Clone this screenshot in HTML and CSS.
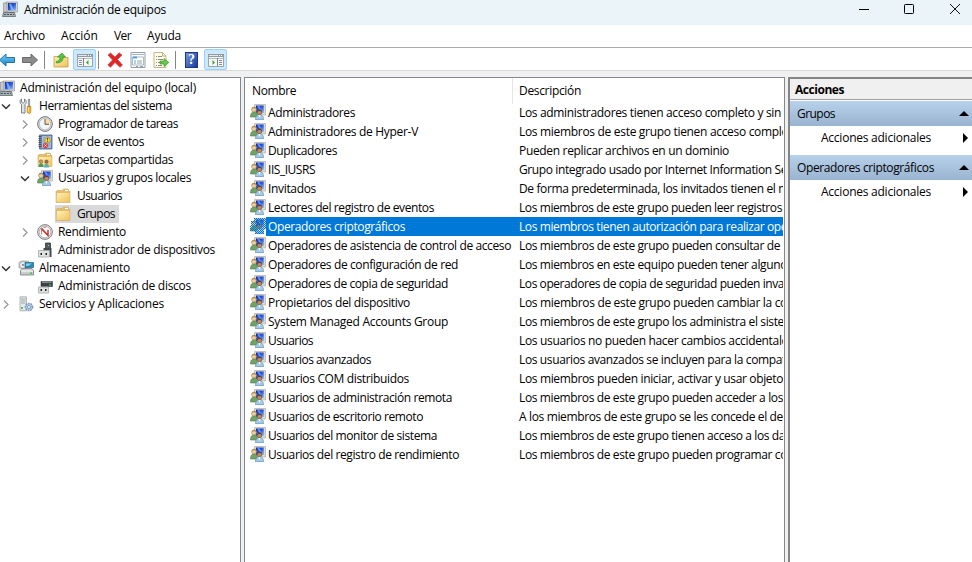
FILE: index.html
```
<!DOCTYPE html>
<html lang="es">
<head>
<meta charset="utf-8">
<title>Administración de equipos</title>
<link rel="stylesheet" href="styles.css">
</head>
<body>
<svg class="defs" aria-hidden="true">
  <linearGradient id="screen" x1="0" y1="0" x2="1" y2="1"><stop offset="0" stop-color="#0a25a8"/><stop offset=".5" stop-color="#2a5be0"/><stop offset="1" stop-color="#8dbcff"/></linearGradient>
  <linearGradient id="folderfill" x1="0" y1="0" x2="1" y2="1"><stop offset="0" stop-color="#fff0b5"/><stop offset="1" stop-color="#eec35c"/></linearGradient>
  <linearGradient id="blueArrow" x1="0" y1="0" x2="0" y2="1"><stop offset="0" stop-color="#7bd0f5"/><stop offset="1" stop-color="#1382c9"/></linearGradient>
  <symbol id="computer" viewBox="0 0 16 16">
    <path d="M4 1h11.500v10H4z" fill="#d9d6c8" stroke="#a3a39c" stroke-width=".8"/><path d="M6 2h8v7.500H6z" fill="url(#screen)"/><path d="M7 2.500h2l3 6.500H9z" fill="#a9c4fa" opacity=".65"/>
    <path d="M1.500 2H5v9H1.500z" fill="#c6c9cc" stroke="#7d8084" stroke-width=".6"/><path d="M8 11h4v1.500H8z" fill="#777"/>
    <path d="M1.500 11.500h11l1 4H.5z" fill="#a9b0b3" stroke="#555c60" stroke-width=".7"/><path d="M2 13.500h2m1 0h2m1 0h2m1 0h1" stroke="#46595d"/>
  </symbol>
  <symbol id="users" viewBox="0 0 16 16">
    <path d="M4.500.5h11V11h-11z" fill="#dedacd" stroke="#b0ada5" stroke-width=".7"/><path d="M6 1.500h7.800v7.500H6z" fill="url(#screen)"/><path d="M7 1.500h2l4 7h-2z" fill="#9bbaf8" opacity=".65"/>
    <path d="M.5 13c0-4 1.500-5 3.500-5s3.500 1 3.500 5z" fill="#6ea565" stroke="#507c4c" stroke-width=".6"/><circle cx="4" cy="5.500" r="2.400" fill="#f0cf9b" stroke="#967a50" stroke-width=".6"/><path d="M1.700 5C2 2.300 6 2.300 6.300 5 5 4 3 4 1.700 5z" fill="#a98a58"/>
    <path d="M5.500 15.700c0-4 2-5 4-5s4 1 4 5z" fill="#a4cbe9" stroke="#5c88b0" stroke-width=".7"/><path d="m8.500 11 1 3 1-3z" fill="#fff"/><circle cx="9.500" cy="8.200" r="2.400" fill="#c48a63" stroke="#68462f" stroke-width=".6"/><path d="M7 8c0-3.500 5-3.500 5 0-1.500-1.500-3.500-1.500-5 0z" fill="#5b4335"/>
  </symbol>
  <symbol id="tools" viewBox="0 0 16 16">
    <path d="M3.500 1v3L5 5.200 6.500 4V1c2 1 2.500 4 .5 5.500V15H3.500V6.500C1.500 5 1.500 2 3.500 1z" fill="#e0e3e5" stroke="#70777b" stroke-width=".9"/><path d="M10.300 1h1.400v8h-1.400z" fill="#9ba1a6" stroke="#6d747a" stroke-width=".5"/><path d="M9.200 8.500h3.600v5c0 2.500-3.600 2.500-3.600 0z" fill="#f2b42f" stroke="#b5750e" stroke-width=".7"/><path d="M10.500 9.500v4" stroke="#ffe08a"/>
  </symbol>
  <symbol id="clock" viewBox="0 0 16 16"><circle cx="8" cy="8" r="7.400" fill="#d5d6d8" stroke="#6c7073" stroke-width=".9"/><circle cx="8" cy="8" r="5.700" fill="#f4f5f7" stroke="#a2a6aa" stroke-width=".6"/><path d="M8 8V2.500A5.500 5.500 0 0 1 13.500 8z" fill="#f8dca4"/><path d="M8 3v5.300h4" fill="none" stroke="#555" stroke-width="1"/></symbol>
  <symbol id="events" viewBox="0 0 16 16"><path d="M2.500 1H15v14H2.500z" fill="#7190bf" stroke="#4c668e" stroke-width=".8"/><path d="M5 2h9v12H5z" fill="#a9bddc"/><path d="M6 4h7m-7 2h7m-7 2h7m-7 2h7m-7 2h7" stroke="#7790b9" stroke-width=".6"/><path d="M1.500 2.500h3m-3 2h3m-3 2h3m-3 2h3m-3 2h3m-3 2h3" stroke="#444" stroke-width=".8"/><path d="m10.500 2 3.500 6H7z" fill="#ffd83b" stroke="#ad9600" stroke-width=".6"/><path d="M10.500 3.800v2m0 .7v1" stroke="#222" stroke-width=".8"/><circle cx="8.500" cy="11.500" r="2.600" fill="#df4245"/><path d="m7.500 10.500 2 2m0-2-2 2" stroke="#fff" stroke-width=".8"/></symbol>
  <symbol id="folder" viewBox="0 0 16 16"><path d="M1 14.500V3.500l1-1h5l1.500-1.500H13l.8 1v1.500h1.200v11z" fill="#e4bd6c" stroke="#cba050" stroke-width=".5"/><path d="M2 5h12.500v9H1.500z" fill="url(#folderfill)"/><path d="M10 2.500h3" stroke="#fff" stroke-width="1.200"/></symbol>
  <symbol id="shared" viewBox="0 0 16 16"><use href="#folder"/><circle cx="4" cy="9.500" r="1.700" fill="#c99f6a" stroke="#6d5128" stroke-width=".5"/><path d="M1.500 15c0-5 5-5 5 0z" fill="#479b67"/><circle cx="9.500" cy="9.700" r="1.700" fill="#a87150" stroke="#553523" stroke-width=".5"/><path d="M7 15.500c0-5 5-5 5 0z" fill="#5caeb8"/></symbol>
  <symbol id="performance" viewBox="0 0 16 16"><circle cx="8" cy="8" r="7.400" fill="#dfe0e2" stroke="#727679" stroke-width=".9"/><circle cx="8" cy="8" r="5.800" fill="#fff" stroke="#999" stroke-width=".6"/><path d="m4 4.500 7 7V5.800" fill="none" stroke="#d93434" stroke-width="1.500"/><path d="M4.500 10.500V6m2-2.300L9.500 3" fill="none" stroke="#e67a7a"/><path d="m5 4 6 7" stroke="#971e23" stroke-width=".6"/></symbol>
  <symbol id="device" viewBox="0 0 16 16"><path d="M8.500 1h5v6h-5z" fill="#555b5e" stroke="#24282a" stroke-width=".7"/><path d="M6.500 6h8v9h-8z" fill="#45494b"/><path d="M1.500 8.500h11v6.500h-11z" fill="#dfe1e0" stroke="#a5a9a8" stroke-width=".8"/><path d="M3.500 11H5v2H3.500zM8.500 11H10v2H8.500z" fill="#222"/><path d="M11 3h1v1h-1z" fill="#71e283"/></symbol>
  <symbol id="storage" viewBox="0 0 16 16"><path d="M1 2.500 3.500 1h7v7H1z" fill="#d2d5d7" stroke="#999fa2" stroke-width=".7"/><circle cx="5" cy="5" r="3.500" fill="#e9ebec" stroke="#8a9294" stroke-width=".6"/><circle cx="5" cy="5" r="1" fill="#777"/><path d="M7 2.500h8.500v5H7z" fill="#2689b7" stroke="#17536c" stroke-width=".6"/><path d="M8 3.500h6l-4 2.500H8z" fill="#82d3f1"/><path d="M2.500 10.500 4 8.500h10l1.500 2v4.500h-13z" fill="#c8cccd" stroke="#696e70" stroke-width=".7"/><path d="M3 11h12" stroke="#fff"/><path d="M12 12.500h2V14h-2z" fill="#30c853"/></symbol>
  <symbol id="disk" viewBox="0 0 16 16"><path d="M4 3.500h11.500v5H4z" fill="#3b4143" stroke="#202425" stroke-width=".5"/><path d="M5 3.500h9.500v1.500H5z" fill="#858b8d"/><path d="M12 6.500h2v1h-2z" fill="#3fe568"/><path d="M1.500 9h10v6h-10z" fill="#dde0df" stroke="#a2a6a6" stroke-width=".8"/><path d="M3.500 11H5v2H3.500zm4.500 0h1.500v2H8z" fill="#222"/></symbol>
  <symbol id="services" viewBox="0 0 16 16"><path d="M2 .8h6.500v14H2z" fill="#e5e8ea" stroke="#a0a6aa" stroke-width=".8"/><path d="M3 3h4.500M3 5h4.500M3 7h4.500" stroke="#8f989e" stroke-width=".8"/><path d="M3 11h2v2H3z" fill="#58bd73"/><circle cx="11" cy="11" r="3.500" fill="#bfd6ed" stroke="#7896b6" stroke-width="1.600" stroke-dasharray="1.700 .8"/><circle cx="11" cy="11" r="1.500" fill="#fff" stroke="#56789c" stroke-width=".7"/></symbol>
  <symbol id="down" viewBox="0 0 16 16"><path d="m3 6.500 4 4 4-4" fill="none" stroke="#333" stroke-width="1.500"/></symbol>
  <symbol id="right" viewBox="0 0 16 16"><path d="m5 4.500 4 4-4 4" fill="none" stroke="#999" stroke-width="1.300"/></symbol>
  <symbol id="pane" viewBox="0 0 16 16"><path d="M.5 2.500h15v12H.5z" fill="#f5f6f7" stroke="#9da4a8"/><path d="M0 2h16v3H0z" fill="#929ba1"/><path d="M1 3.500h9" stroke="#e3e7e9"/><path d="M11 3h1v1h-1zm2 0h1v1h-1z" fill="#fff"/><path d="M1 6.500h14" stroke="#b5bcc0"/></symbol>
</svg>

<header class="titlebar">
  <svg class="app-icon"><use href="#computer"/></svg>
  <h1 data-width="142">Administración de equipos</h1>
  <svg class="window-controls" viewBox="0 0 102 16"><path d="M0 8.500h10" stroke="#000"/><rect x="45.500" y="3.500" width="9" height="9" rx=".8" fill="none" stroke="#000"/><path d="m91 3 10 10m0-10L91 13" stroke="#111"/></svg>
</header>
<nav class="menubar"><span data-width="41">Archivo</span><span data-width="37">Acción</span><span data-width="17">Ver</span><span data-width="34">Ayuda</span></nav>
<div class="toolbar">
  <svg class="back" viewBox="0 0 16 16"><path d="M-.5 8 6 2v3.500h8.500v5H6V14z" fill="url(#blueArrow)" stroke="#176b9b" stroke-width=".9"/></svg>
  <svg class="forward" viewBox="0 0 16 16"><path d="M15.500 8 9 2v3.500H.5v5H9V14z" fill="#8c8c8c" stroke="#606060" stroke-width=".9"/></svg>
  <i class="separator first"></i>
  <svg class="up" viewBox="0 0 16 16"><path d="M1 15V4.500h5L7.500 5.500H15V15z" fill="url(#folderfill)" stroke="#c59a47" stroke-width=".8"/><path d="M3 9.500c3 0 4-2 4-4.500H4.500L9 1l3.500 4h-2.300c0 4-2 5.500-6.700 6z" fill="#4fc93b" stroke="#278522" stroke-width=".6"/></svg>
  <span class="toggle"><svg viewBox="0 0 16 16"><use href="#pane"/><path d="M6.500 6v8" stroke="#7b858c"/><path d="M2 8.500h3m-3 2h3m-3 2h3" stroke="#7b858c" stroke-width=".9"/><path d="M11.500 8 9 10.500l2.500 2.500z" fill="#40a52d"/></svg></span>
  <i class="separator second"></i>
  <svg class="delete" viewBox="0 0 16 16"><path d="m1 3 2.500-2L8 5l4-4.200L15 3l-4.500 4.500L15.500 13 13 15.300 8 10.500l-4.500 4.800L.8 13l4.700-5z" fill="#df2525" stroke="#c24a4a" stroke-width=".7"/></svg>
  <svg class="properties" viewBox="0 0 16 16"><path d="M1 .5h14v15H1z" fill="#f9fafb" stroke="#89949b" stroke-width=".9"/><path d="M2 2.500h12" stroke="#a6b7c4"/><path d="M2.500 5h11v8h-11z" fill="#fff" stroke="#9ba8b2" stroke-width=".8"/><path d="M3 4.500h4v2H3zM4 8.500h2v1H4zm0 2h2v1H4z" fill="#48a7dc"/><path d="M7 9h5m-5 2h5m-6 3.500h2m2 0h3" stroke="#788b99" stroke-width=".8"/></svg>
  <svg class="export" viewBox="0 0 16 16"><path d="M1 .5h8.500L13 4v11.500H1z" fill="#fffbe4" stroke="#b1a779" stroke-width=".8"/><path d="M9.500.5V4H13" fill="none" stroke="#b1a779" stroke-width=".8"/><path d="M3 4.500h1m1 0h4m-6 3h1m1 0h5m-7 3h1m1 0h2m-4 3h1m1 0h4" stroke="#6c7278" stroke-width=".8"/><path d="M7 9h4V6.500l4.800 4L11 14.500V12H7z" fill="#67c749" stroke="#358d28" stroke-width=".6"/></svg>
  <i class="separator third"></i>
  <span class="help">?</span>
  <span class="toggle last"><svg viewBox="0 0 16 16"><use href="#pane"/><path d="M9.500 6v8" stroke="#7b858c"/><path d="M11 8.500h3m-3 2h3m-3 2h3" stroke="#7b858c" stroke-width=".9"/><path d="M4.500 8 7 10.500 4.500 13z" fill="#40a52d"/></svg></span>
</div>
<main class="workspace">
  <aside class="tree" id="tree"></aside>
  <section class="groups">
    <div class="columns"><span><b data-width="44">Nombre</b></span><span><b data-width="62">Descripción</b></span></div>
    <div id="rows"></div>
  </section>
  <aside class="actions">
    <h2><span data-width="49">Acciones</span></h2>
    <div class="action-head"><span data-width="38">Grupos</span><i></i></div>
    <div class="action"><span data-width="110">Acciones adicionales</span><i></i></div>
    <div class="action-head"><span data-width="137">Operadores criptográficos</span><i></i></div>
    <div class="action"><span data-width="110">Acciones adicionales</span><i></i></div>
  </aside>
</main>
<script src="app.js"></script>
</body>
</html>
```
FILE: styles.css
```
* { box-sizing: border-box; }
body { margin: 0; width: 972px; height: 562px; overflow: hidden; display: flex; flex-direction: column; background: #f0f0f0; color: #000; font: 12px/18px "Open Sans", "Noto Sans", sans-serif; }
svg { display: block; flex: none; width: 16px; height: 16px; }
.defs { position: absolute; width: 0; height: 0; }
h1, h2 { margin: 0; font: inherit; }
span { white-space: pre; }
[data-width] { display: inline-block; white-space: pre; }
.titlebar { height: 25px; flex: none; display: flex; background: #ebf4f8; padding: 1px 11px 0 2px; }
.titlebar h1 { margin: 0 auto 0 6px; }
.titlebar .window-controls { width: 102px; height: 16px; }
.menubar { height: 22px; flex: none; display: flex; gap: 16px; padding: 2px 4px; background: #fff; }
.toolbar { height: 24px; flex: none; display: flex; align-items: center; background: #fff; border-top: 1px solid #acacac; border-bottom: 1px solid #d9d9d9; }
.toolbar > * { margin-top: 1px; }
.forward { margin-left: 6px; }
.separator { width: 1px; height: 18px; background: #858585; flex: none; }
.toolbar .first { margin: 1px 8px 0 6px; }
.toggle { width: 23px; height: 21px; flex: none; display: flex; align-items: center; justify-content: center; margin-left: 4px; background: #cce8ff; border: 1px solid #99d1ff; border-radius: 2px; }
.toolbar .second { margin: 1px 8px 0 2px; }
.properties { margin-left: 7px; }
.export { margin-left: 7px; }
.toolbar .third { margin: 1px 9px 0 6px; }
.help { width: 13px; height: 16px; background: linear-gradient(120deg,#7194df,#173a9c); border: 1px solid #183780; color: #fff; font: bold 14px/14px "Liberation Serif", serif; text-align: center; }
.last { margin-left: 6px; }
.workspace { flex: 1; display: flex; padding-top: 6px; min-height: 0; }
.tree { width: 241px; margin-right: 3px; border: 1px solid #828790; border-left: 0; border-bottom: 0; background: #fff; padding-top: 1px; flex: none; }
.node { height: 18px; display: flex; align-items: center; }
.node .chevron { width: 16px; height: 16px; margin-right: 3px; }
.level0 { margin-left: -1px; }
.level1 { margin-left: -1px; }
.level2 { margin-left: 18px; }
.level3 { margin-left: 55px; }
.level0 .label { margin-left: 5px; }
.level1 .label { margin-left: 5px; }
.level2 .label { margin-left: 5px; }
.level3 .label { margin-left: 6px; }
.node.selected { width: 64px; background: #d9d9d9; }
.groups { width: 541px; margin-right: 3px; flex: none; border: 1px solid #828790; border-bottom: 0; background: #fff; padding-right: 1px; overflow: hidden; }
.columns { height: 25px; display: grid; grid-template-columns: 267px 1fr; line-height: 26px; }
.columns b { font-weight: normal; }
.columns span { padding-left: 7px; }
.columns span + span { padding-left: 6px; border-left: 1px solid #e5e5e5; }
.row { height: 19px; display: grid; grid-template-columns: 16px 247px 1fr; padding-left: 5px; line-height: 19px; }
.row svg { margin-top: 1px; }
.cell { padding: 0 0 0 2px; height: 19px; overflow: hidden; }
.cell + .cell { padding-left: 6px; }
.cell span { vertical-align: top; line-height: 20px; }
.row.selected .cell { background: #0078d7; color: #fff; }
.actions { flex: 1; min-width: 0; border: 2px solid #696969; border-color: #858585 #696969 #696969 #858585; border-right: 0; border-bottom: 0; background: #fff; }
.actions h2 { height: 21px; background: #f0f0f0; border-bottom: 1px solid #a0a0a0; padding-left: 5px; font-weight: bold; line-height: 22px; }
.action-head { height: 25px; margin-top: 1px; background: linear-gradient(#b9d1ea,#99b4d1); display: flex; justify-content: space-between; align-items: center; padding: 0 3px 0 7px; }
.action-head i { border: 5px solid transparent; border-top: 0; border-bottom-color: #000; }
.action { height: 28px; display: flex; justify-content: space-between; padding: 3px 4px 0 31px; }
.action i { margin-top: 4px; height: 10px; border: 5px solid transparent; border-right: 0; border-left-color: #000; }
```
FILE: app.js
```
const tree = [
  [0, '', 'computer', 'Administración del equipo (local)', 176],
  [1, 'down', 'tools', 'Herramientas del sistema', 133],
  [2, 'right', 'clock', 'Programador de tareas', 120],
  [2, 'right', 'events', 'Visor de eventos', 86],
  [2, 'right', 'shared', 'Carpetas compartidas', 115],
  [2, 'down', 'users', 'Usuarios y grupos locales', 133],
  [3, '', 'folder', 'Usuarios', 45],
  [3, '', 'folder', 'Grupos', 38, true],
  [2, 'right', 'performance', 'Rendimiento', 68],
  [2, '', 'device', 'Administrador de dispositivos', 157],
  [1, 'down', 'storage', 'Almacenamiento', 91],
  [2, '', 'disk', 'Administración de discos', 133],
  [1, 'right', 'services', 'Servicios y Aplicaciones', 125]
];
const groups = [
  ['Administradores', 87, 'Los administradores tienen acceso completo y sin', 262],
  ['Administradores de Hyper-V', 150, 'Los miembros de este grupo tienen acceso comple', 269],
  ['Duplicadores', 69, 'Pueden replicar archivos en un dominio', 210],
  ['IIS_IUSRS', 47, 'Grupo integrado usado por Internet Information Se', 268],
  ['Invitados', 48, 'De forma predeterminada, los invitados tienen el m', 270],
  ['Lectores del registro de eventos', 166, 'Los miembros de este grupo pueden leer registros', 263],
  ['Operadores criptográficos', 137, 'Los miembros tienen autorización para realizar ope', 268],
  ['Operadores de asistencia de control de acceso', 243, 'Los miembros de este grupo pueden consultar de', 261],
  ['Operadores de configuración de red', 190, 'Los miembros en este equipo pueden tener alguno', 268],
  ['Operadores de copia de seguridad', 180, 'Los operadores de copia de seguridad pueden inva', 265],
  ['Propietarios del dispositivo', 142, 'Los miembros de este grupo pueden cambiar la co', 268],
  ['System Managed Accounts Group', 180, 'Los miembros de este grupo los administra el siste', 265],
  ['Usuarios', 45, 'Los usuarios no pueden hacer cambios accidentale', 269],
  ['Usuarios avanzados', 103, 'Los usuarios avanzados se incluyen para la compat', 267],
  ['Usuarios COM distribuidos', 141, 'Los miembros pueden iniciar, activar y usar objeto', 264],
  ['Usuarios de administración remota', 184, 'Los miembros de este grupo pueden acceder a los', 264],
  ['Usuarios de escritorio remoto', 155, 'A los miembros de este grupo se les concede el de', 264],
  ['Usuarios del monitor de sistema', 169, 'Los miembros de este grupo tienen acceso a los da', 266],
  ['Usuarios del registro de rendimiento', 191, 'Los miembros de este grupo pueden programar co', 268]
];
const icon = (name, cls = '') => `<svg class="${cls}" viewBox="0 0 16 16"><use href="#${name}"/></svg>`;
document.getElementById('tree').innerHTML = tree.map(([level, chevron, image, label, width, selected]) => {
  const arrow = level === 1 || level === 2 ? (chevron ? icon(chevron, 'chevron') : '<svg class="chevron"></svg>') : '';
  return `<div class="node level${level} ${selected ? 'selected' : ''}">${arrow}${icon(image)}<span class="label" data-width="${width}">${label}</span></div>`;
}).join('');
// Selected icons carry a one-pixel checkerboard over their silhouette.
let checker = '';
for (let y = 0; y < 16; y++) {
  const first = y < 3 ? 4 : y < 7 ? 1 : y < 13 ? 0 : 5;
  const end = y < 11 ? 16 : 14;
  for (let x = first; x < end; x++) if ((x + y) % 2 === 0) checker += `M${x} ${y}h1v1h-1z`;
}
document.getElementById('rows').innerHTML = groups.map(([name, nameWidth, text, textWidth], i) => {
  const image = i === 6 ? `<svg viewBox="0 0 16 16"><use href="#users"/><path shape-rendering="crispEdges" fill="#0078d7" d="${checker}"/></svg>` : icon('users');
  return `<div class="row ${i === 6 ? 'selected' : ''}">${image}<div class="cell"><span data-width="${nameWidth}">${name}</span></div><div class="cell"><span data-width="${textWidth}">${text}</span></div></div>`;
}).join('');
// Tighten the tracking so each label takes its listed width.
document.querySelectorAll('[data-width]').forEach(el => {
  const natural = el.getBoundingClientRect().width;
  el.style.letterSpacing = (Number(el.dataset.width) - natural) / el.textContent.length + 'px';
});
```
